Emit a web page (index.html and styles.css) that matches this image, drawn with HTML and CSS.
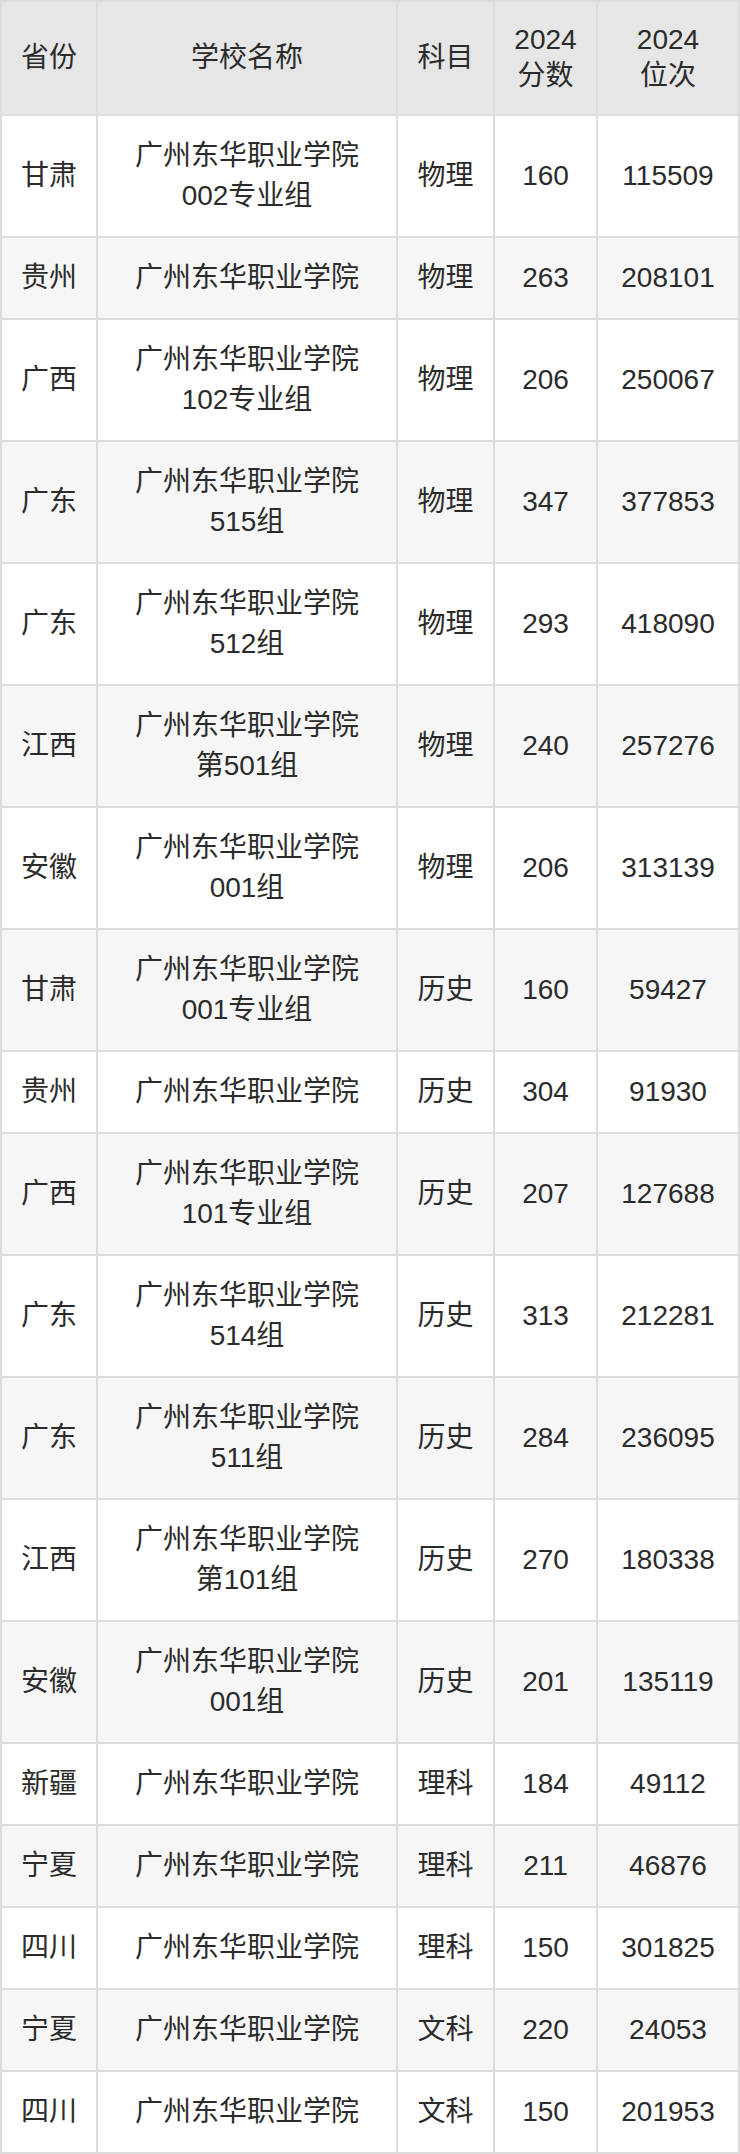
FILE: index.html
```html
<!DOCTYPE html>
<html lang="zh-CN">
<head>
<meta charset="utf-8">
<title>广州东华职业学院 2024 分数</title>
<link rel="stylesheet" href="styles.css">
</head>
<body>
<table class="score-table">
  <colgroup>
    <col class="c-prov">
    <col class="c-name">
    <col class="c-subj">
    <col class="c-score">
    <col class="c-rank">
  </colgroup>
  <thead>
    <tr>
      <th>省份</th>
      <th>学校名称</th>
      <th>科目</th>
      <th>2024<br>分数</th>
      <th>2024<br>位次</th>
    </tr>
  </thead>
  <tbody>
    <tr><td>甘肃</td><td>广州东华职业学院<br>002专业组</td><td>物理</td><td>160</td><td>115509</td></tr>
    <tr><td>贵州</td><td>广州东华职业学院</td><td>物理</td><td>263</td><td>208101</td></tr>
    <tr><td>广西</td><td>广州东华职业学院<br>102专业组</td><td>物理</td><td>206</td><td>250067</td></tr>
    <tr><td>广东</td><td>广州东华职业学院<br>515组</td><td>物理</td><td>347</td><td>377853</td></tr>
    <tr><td>广东</td><td>广州东华职业学院<br>512组</td><td>物理</td><td>293</td><td>418090</td></tr>
    <tr><td>江西</td><td>广州东华职业学院<br>第501组</td><td>物理</td><td>240</td><td>257276</td></tr>
    <tr><td>安徽</td><td>广州东华职业学院<br>001组</td><td>物理</td><td>206</td><td>313139</td></tr>
    <tr><td>甘肃</td><td>广州东华职业学院<br>001专业组</td><td>历史</td><td>160</td><td>59427</td></tr>
    <tr><td>贵州</td><td>广州东华职业学院</td><td>历史</td><td>304</td><td>91930</td></tr>
    <tr><td>广西</td><td>广州东华职业学院<br>101专业组</td><td>历史</td><td>207</td><td>127688</td></tr>
    <tr><td>广东</td><td>广州东华职业学院<br>514组</td><td>历史</td><td>313</td><td>212281</td></tr>
    <tr><td>广东</td><td>广州东华职业学院<br>511组</td><td>历史</td><td>284</td><td>236095</td></tr>
    <tr><td>江西</td><td>广州东华职业学院<br>第101组</td><td>历史</td><td>270</td><td>180338</td></tr>
    <tr><td>安徽</td><td>广州东华职业学院<br>001组</td><td>历史</td><td>201</td><td>135119</td></tr>
    <tr><td>新疆</td><td>广州东华职业学院</td><td>理科</td><td>184</td><td>49112</td></tr>
    <tr><td>宁夏</td><td>广州东华职业学院</td><td>理科</td><td>211</td><td>46876</td></tr>
    <tr><td>四川</td><td>广州东华职业学院</td><td>理科</td><td>150</td><td>301825</td></tr>
    <tr><td>宁夏</td><td>广州东华职业学院</td><td>文科</td><td>220</td><td>24053</td></tr>
    <tr><td>四川</td><td>广州东华职业学院</td><td>文科</td><td>150</td><td>201953</td></tr>
  </tbody>
</table>
</body>
</html>
```

FILE: styles.css
```css
html, body {
  margin: 0;
  padding: 0;
  background: #ffffff;
}

.score-table {
  width: 740px;
  table-layout: fixed;
  border-collapse: collapse;
  font-family: "Liberation Sans", "Noto Sans CJK SC", sans-serif;
  font-size: 28px;
  color: #2b2b2b;
}

.c-prov { width: 96px; }
.c-name { width: 300px; }
.c-subj { width: 97px; }
.c-score { width: 103px; }
.c-rank { width: 142px; }

.score-table th,
.score-table td {
  border: 2px solid #dcdcdc;
  text-align: center;
  vertical-align: middle;
  padding: 20px 2px;
  line-height: 40px;
  font-weight: normal;
}

.score-table th {
  background: #e6e6e6;
  line-height: 36px;
}

.score-table tbody tr:nth-child(even) td {
  background: #f6f6f6;
}
```
